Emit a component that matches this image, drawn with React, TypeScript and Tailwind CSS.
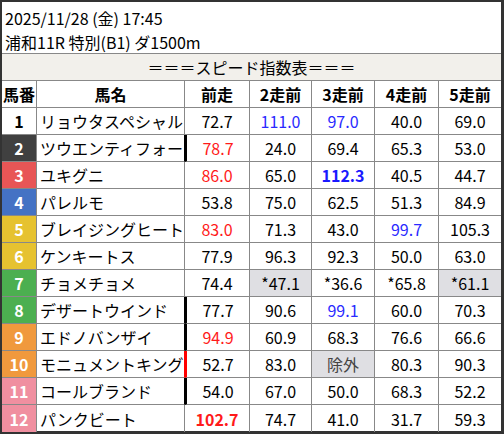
const rows = [
  { n: 1, name: "リョウタスペシャル", num: "bg-white text-black", v: ["72.7", "111.0", "97.0", "40.0", "69.0"] },
  { n: 2, name: "ツウエンティフォー", num: "bg-[#404040] text-white", v: ["78.7", "24.0", "69.4", "65.3", "53.0"], bar: "black" },
  { n: 3, name: "ユキグニ", num: "bg-[#e85656] text-white", v: ["86.0", "65.0", "112.3", "40.5", "44.7"] },
  { n: 4, name: "パレルモ", num: "bg-[#4472c4] text-white", v: ["53.8", "75.0", "62.5", "51.3", "84.9"] },
  { n: 5, name: "ブレイジングヒート", num: "bg-[#e6c230] text-white", v: ["83.0", "71.3", "43.0", "99.7", "105.3"] },
  { n: 6, name: "ケンキートス", num: "bg-[#e6c230] text-white", v: ["77.9", "96.3", "92.3", "50.0", "63.0"] },
  { n: 7, name: "チョメチョメ", num: "bg-[#4caf50] text-white", v: ["74.4", "*47.1", "*36.6", "*65.8", "*61.1"] },
  { n: 8, name: "デザートウインド", num: "bg-[#4caf50] text-white", v: ["77.7", "90.6", "99.1", "60.0", "70.3"], bar: "black" },
  { n: 9, name: "エドノバンザイ", num: "bg-[#f0993d] text-white", v: ["94.9", "60.9", "68.3", "76.6", "66.6"], bar: "black" },
  { n: 10, name: "モニュメントキング", num: "bg-[#f0993d] text-white", v: ["52.7", "83.0", "除外", "80.3", "90.3"], bar: "red" },
  { n: 11, name: "コールブランド", num: "bg-[#f08fa0] text-white", v: ["54.0", "67.0", "50.0", "68.3", "52.2"], bar: "black" },
  { n: 12, name: "パンクビート", num: "bg-[#f08fa0] text-white", v: ["102.7", "74.7", "41.0", "31.7", "59.3"] },
];

// per-cell styling: [row][col]
const red = "text-[#ff1a1a]";
const blue = "text-[#2a2aff]";
const special: Record<string, string> = {
  "1-1": blue,
  "1-2": blue,
  "2-0": red,
  "3-0": red,
  "3-2": "text-[#1a1aff] font-bold",
  "5-0": red,
  "5-3": blue,
  "7-1": "bg-[#dfdfe3]",
  "7-4": "bg-[#dfdfe3]",
  "8-2": blue,
  "9-0": red,
  "10-2": "bg-[#dfdfe3] text-[#444]",
  "12-0": "text-[#ff1a1a] font-bold",
};

const heads = ["前走", "2走前", "3走前", "4走前", "5走前"];

export default function App() {
  return (
    <div
      className="w-[504px] h-[434px] bg-white text-[16px] text-black border-t-2 border-l-2 border-r-[3px] border-b-[3px] border-[#333]"
      style={{ fontFamily: '"Noto Sans CJK JP", "Noto Sans", sans-serif' }}
    >
      <div className="h-[51px] px-[3px] pt-[4px] leading-[24px]">
        <div>2025/11/28 (金) 17:45</div>
        <div>浦和11R 特別(B1) ダ1500m</div>
      </div>
      <div className="h-[28px] border-y border-[#888] bg-[#f2f0eb] flex items-center justify-center">
        ＝＝＝スピード指数表＝＝＝
      </div>
      <div className="grid grid-cols-[35px_148px_65px_62px_63px_64px_62px] auto-rows-[27px]">
        <div className="border-r border-b border-[#888] flex items-center justify-center font-bold">馬番</div>
        <div className="border-r border-b border-[#888] flex items-center justify-center font-bold">馬名</div>
        {heads.map((h, i) => (
          <div
            key={h}
            className={`border-b border-[#888] flex items-center justify-center font-bold ${i < 4 ? "border-r" : ""}`}
          >
            {h}
          </div>
        ))}
        {rows.map((r) => (
          <>
            <div
              key={`n${r.n}`}
              className={`border-r border-[#888] flex items-center justify-center font-bold ${r.n < 12 ? "border-b" : ""} ${r.num}`}
            >
              {r.n}
            </div>
            <div
              key={`m${r.n}`}
              className={`border-r flex items-center pl-[3px] whitespace-nowrap overflow-hidden ${r.n < 12 ? "border-b border-b-[#888]" : ""} ${
                r.bar === "black" ? "border-r-black" : r.bar === "red" ? "border-r-[#ff0000]" : "border-r-[#888]"
              }`}
            >
              {r.name}
            </div>
            {r.v.map((v, i) => (
              <div
                key={`v${r.n}-${i}`}
                className={`flex items-center justify-center border-[#888] ${i < 4 ? "border-r" : ""} ${r.n < 12 ? "border-b" : ""} ${
                  i === 0 && r.bar === "black" ? "border-l-2 border-l-black" : ""
                } ${i === 0 && r.bar === "red" ? "border-l-2 border-l-[#ff0000]" : ""} ${special[`${r.n}-${i}`] ?? ""}`}
              >
                {v}
              </div>
            ))}
          </>
        ))}
      </div>
    </div>
  );
}
